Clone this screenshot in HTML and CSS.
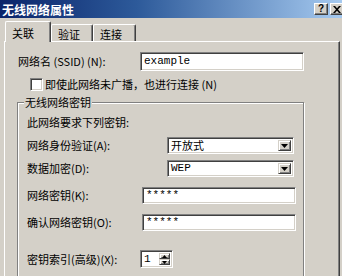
FILE: index.html
```html
<!DOCTYPE html>
<html lang="zh-CN">
<head>
    <meta charset="UTF-8">
    <title>无线网络属性</title>
    <link rel="stylesheet" href="styles.css">
</head>
<body>

<div class="window">
    <!-- Barra de título -->
    <div class="titlebar">
        <span class="title">无线网络属性</span>
        <div class="title-buttons">
            <span class="tbtn tbtn-help">?</span>
            <span class="tbtn">
                <svg width="8" height="7" viewBox="0 0 8 7"><path d="M0 0h2l2 2.2L6 0h2L5 3.5 8 7H6L4 4.8 2 7H0l3-3.5z" fill="#000"/></svg>
            </span>
        </div>
    </div>

    <div class="tabs">
        <div class="tab tab-1 active">关联</div>
        <div class="tab tab-2">验证</div>
        <div class="tab tab-3">连接</div>
    </div>

    <div class="panel">
        <div class="row">
            <span class="lbl lbl-ssid">网络名 (SSID) (N):</span>
            <div class="field field-ssid mono">example</div>
        </div>

        <div class="check-row">
            <span class="checkbox"></span>
            <span>即使此网络未广播，也进行连接 (N)</span>
        </div>

        <div class="group">
            <div class="group-title">无线网络密钥</div>
            <div class="note">此网络要求下列密钥:</div>

            <div class="row row-auth">
                <span class="lbl lbl-select">网络身份验证(A):</span>
                <div class="select">
                    <span class="select-text">开放式</span>
                    <span class="drop"><svg width="7" height="4" viewBox="0 0 7 4"><path d="M0 0h7L3.5 4z" fill="#000"/></svg></span>
                </div>
            </div>

            <div class="row row-enc">
                <span class="lbl lbl-select">数据加密(D):</span>
                <div class="select">
                    <span class="select-text mono">WEP</span>
                    <span class="drop"><svg width="7" height="4" viewBox="0 0 7 4"><path d="M0 0h7L3.5 4z" fill="#000"/></svg></span>
                </div>
            </div>

            <div class="row row-key">
                <span class="lbl lbl-key">网络密钥(K):</span>
                <div class="field field-key mono">*****</div>
            </div>

            <div class="row row-confirm">
                <span class="lbl lbl-key">确认网络密钥(O):</span>
                <div class="field field-key mono">*****</div>
            </div>

            <div class="row row-index">
                <span class="lbl lbl-index">密钥索引(高级)(X):</span>
                <div class="spin">
                    <span class="spin-text mono">1</span>
                    <span class="spin-btns">
                        <span class="spin-btn"><svg width="5" height="3" viewBox="0 0 5 3"><path d="M0 3h5L2.5 0z" fill="#000"/></svg></span>
                        <span class="spin-btn"><svg width="5" height="3" viewBox="0 0 5 3"><path d="M0 0h5L2.5 3z" fill="#000"/></svg></span>
                    </span>
                </div>
            </div>
        </div>
    </div>
</div>

</body>
</html>
```

FILE: styles.css
```css
body {
    margin: 0;
    padding: 0;
    font-family: "Noto Sans CJK SC", "DejaVu Sans", sans-serif;
    font-size: 11px;
    line-height: 13px;
    color: #000;
    background-color: #d4d0c8;
}

.window {
    width: 342px;
    height: 276px;
    overflow: hidden;
    background-color: #d4d0c8;
    display: flex;
    flex-direction: column;
}

.mono {
    font-family: "Liberation Mono", "DejaVu Sans Mono", monospace;
    font-size: 11px;
}

/* Barra de título */
.titlebar {
    height: 18px;
    flex: none;
    display: flex;
    align-items: center;
    justify-content: space-between;
    padding-left: 2px;
    background: linear-gradient(to right, #0a246a 0%, #2d5a9a 40%, #a6caf0 100%);
}

.title {
    color: #fff;
    font-weight: bold;
    font-size: 12px;
}

.title-buttons {
    display: flex;
    gap: 2px;
    margin-right: -2px;
}

.tbtn {
    width: 14px;
    height: 12px;
    box-sizing: border-box;
    display: flex;
    align-items: center;
    justify-content: center;
    background-color: #d4d0c8;
    border: 1px solid;
    border-color: #fff #404040 #404040 #fff;
    box-shadow: inset -1px -1px 0 #808080;
}

.tbtn-help {
    font-family: "Liberation Sans", sans-serif;
    font-weight: bold;
    font-size: 10px;
    line-height: 10px;
}

/* Pestañas */
.tabs {
    height: 23px;
    flex: none;
    display: flex;
    align-items: flex-end;
    padding-left: 5px;
}

.tab {
    box-sizing: border-box;
    height: 17px;
    padding-top: 3px;
    padding-left: 6px;
    background-color: #d4d0c8;
    border-top: 1px solid #fff;
    border-left: 1px solid #fff;
    border-right: 1px solid #404040;
    border-radius: 2px 2px 0 0;
    box-shadow: inset -1px 0 0 #808080;
}

.tab-1 { width: 46px; }
.tab-2 { width: 42px; }
.tab-3 { width: 43px; }

.tab.active {
    height: 21px;
    padding-top: 5px;
    margin-bottom: -1px;
    position: relative;
    z-index: 1;
}

/* Panel */
.panel {
    flex: 1;
    margin: 0 2px 0 4px;
    padding: 10px 35px 0 13px;
    border-top: 1px solid #fff;
    border-left: 1px solid #fff;
    border-right: 1px solid #404040;
    box-shadow: inset -1px 0 0 #808080;
}

.row {
    display: flex;
    align-items: center;
}

.lbl {
    flex: none;
}

.lbl-ssid { width: 122px; }
.lbl-select { width: 140px; }
.lbl-key { width: 115px; }
.lbl-index { width: 113px; }

.field {
    box-sizing: border-box;
    height: 19px;
    padding: 0 3px;
    display: flex;
    align-items: center;
    background-color: #fff;
    border: 1px solid;
    border-color: #808080 #fff #fff #808080;
    box-shadow: inset 1px 1px 0 #404040, inset -1px -1px 0 #d4d0c8;
}

.field-ssid {
    flex: 1;
}

.field-key {
    width: 154px;
    height: 17px;
}

.check-row {
    margin-top: 7px;
    padding-left: 12px;
    display: flex;
    align-items: center;
    gap: 2px;
}

.checkbox {
    width: 13px;
    height: 13px;
    box-sizing: border-box;
    background-color: #fff;
    border: 1px solid;
    border-color: #808080 #fff #fff #808080;
    box-shadow: inset 1px 1px 0 #404040, inset -1px -1px 0 #d4d0c8;
}

/* Grupo de claves */
.group {
    margin: 11px 0 0 -1px;
    padding: 0 0 30px 9px;
    border: 1px solid #808080;
    box-shadow: inset 1px 1px 0 #fff, 1px 1px 0 #fff;
}

.group-title {
    width: fit-content;
    margin: -7px 0 0 -3px;
    padding: 0 1px;
    background-color: #d4d0c8;
}

.note {
    margin-top: 7px;
}

.row-auth { margin-top: 8px; }
.row-enc { margin-top: 6px; }
.row-key { margin-top: 10px; }
.row-confirm { margin-top: 10px; }
.row-index { margin-top: 19px; }

.select {
    box-sizing: border-box;
    width: 127px;
    height: 17px;
    padding: 2px;
    display: flex;
    align-items: center;
    justify-content: space-between;
    background-color: #fff;
    border: 1px solid;
    border-color: #808080 #fff #fff #808080;
    box-shadow: inset 1px 1px 0 #404040, inset -1px -1px 0 #d4d0c8;
}

.select-text {
    padding-left: 1px;
}

.drop, .spin-btn {
    box-sizing: border-box;
    display: flex;
    align-items: center;
    justify-content: center;
    background-color: #d4d0c8;
    border: 1px solid;
    border-color: #d4d0c8 #404040 #404040 #d4d0c8;
    box-shadow: inset 1px 1px 0 #fff, inset -1px -1px 0 #808080;
}

.drop {
    width: 13px;
    height: 11px;
}

.spin {
    box-sizing: border-box;
    width: 33px;
    height: 18px;
    padding: 2px;
    display: flex;
    align-items: center;
    justify-content: space-between;
    background-color: #fff;
    border: 1px solid;
    border-color: #808080 #fff #fff #808080;
    box-shadow: inset 1px 1px 0 #404040, inset -1px -1px 0 #d4d0c8;
}

.spin-text {
    padding-left: 1px;
}

.spin-btns {
    display: flex;
    flex-direction: column;
    height: 12px;
}

.spin-btn {
    width: 11px;
    height: 6px;
}
```
